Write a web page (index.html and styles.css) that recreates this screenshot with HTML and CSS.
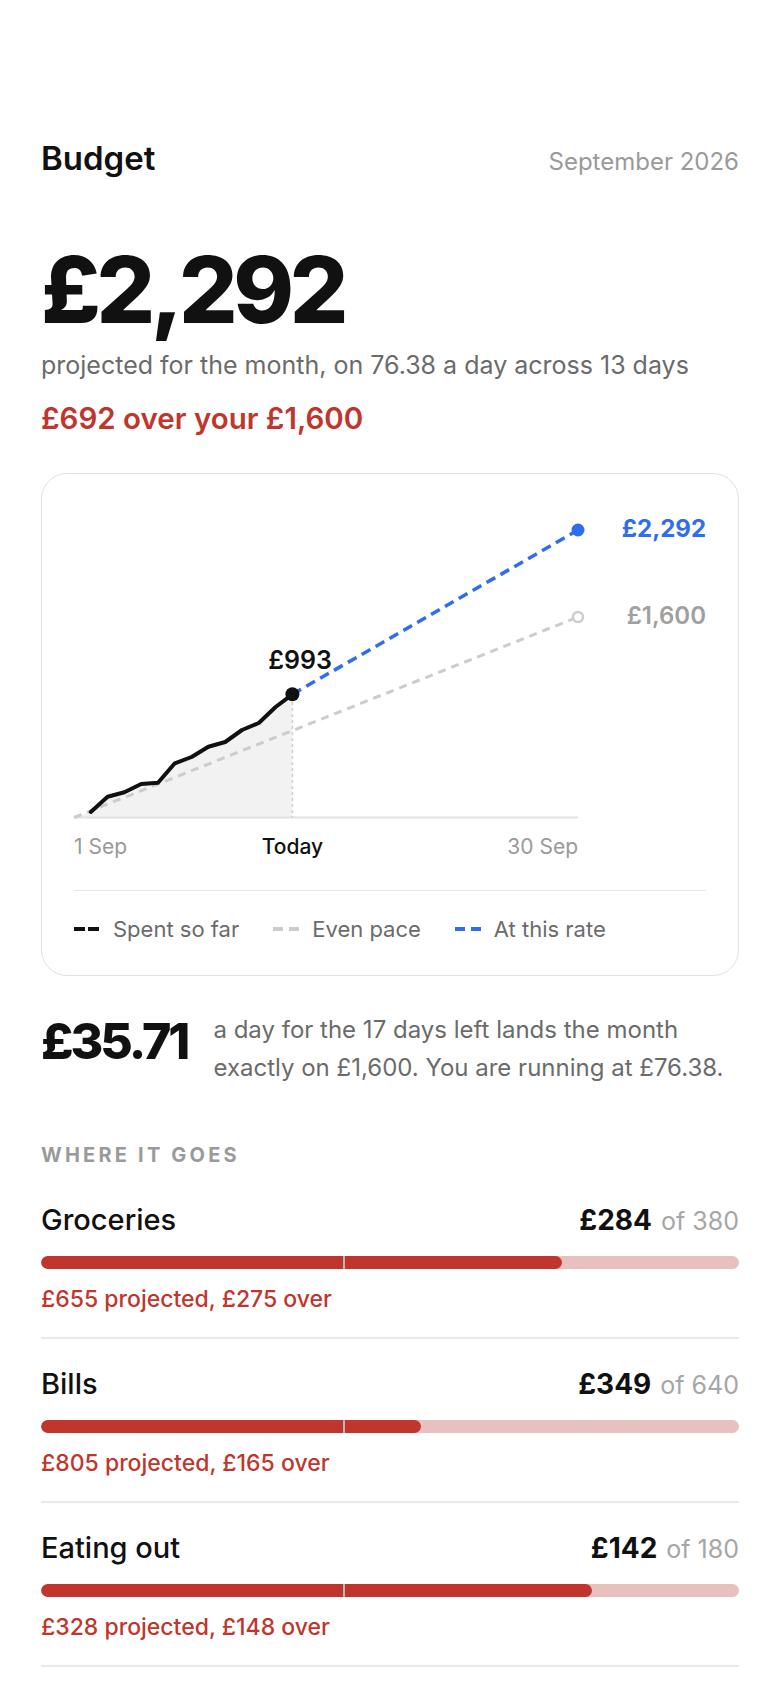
FILE: index.html
```
<!DOCTYPE html>
<html lang="en">
<head>
<meta charset="utf-8">
<title>Budget</title>
<link rel="stylesheet" href="styles.css">
</head>
<body>
<main class="page">
  <header class="header">
    <h1 class="title">Budget</h1>
    <span class="month">September 2026</span>
  </header>

  <section class="hero">
    <div class="hero-amount">£2,292</div>
    <p class="hero-sub">projected for the month, on 76.38 a day across 13 days</p>
    <p class="hero-over">£692 over your £1,600</p>
  </section>

  <section class="card">
    <svg class="chart" width="632" height="360" viewBox="0 0 632 360">
      <polygon class="area" points="0,311.5 16.8,306 33.6,290.7 50.4,286.3 67.2,278 84,276.7 100.8,257.3 117.6,251 134.4,240.7 151.2,236 168,224 184.8,217 201.6,201 218.4,188.3 218.4,311.5"/>
      <line class="axis" x1="0" y1="311.5" x2="504" y2="311.5"/>
      <line class="today-line" x1="218.4" y1="190" x2="218.4" y2="311.5"/>
      <line class="even" x1="0" y1="311.5" x2="504" y2="111"/>
      <line class="rate" x1="218.4" y1="188.3" x2="504" y2="24"/>
      <polyline class="spent" points="16.8,306 33.6,290.7 50.4,286.3 67.2,278 84,276.7 100.8,257.3 117.6,251 134.4,240.7 151.2,236 168,224 184.8,217 201.6,201 218.4,188.3"/>
      <circle class="dot-now" cx="218.4" cy="188.3" r="7"/>
      <circle class="dot-rate" cx="504" cy="24" r="6.5"/>
      <circle class="dot-even" cx="504" cy="111" r="5"/>
      <text class="lbl-now" x="226" y="163">£993</text>
      <text class="lbl-rate" x="632" y="31">£2,292</text>
      <text class="lbl-even" x="632" y="118">£1,600</text>
      <text class="tick" x="0" y="348">1 Sep</text>
      <text class="tick tick-today" x="218.4" y="348">Today</text>
      <text class="tick tick-end" x="504" y="348">30 Sep</text>
    </svg>
    <div class="legend">
      <div class="legend-item">
        <svg class="key" width="26" height="4" viewBox="0 0 26 4"><line class="key-spent" x1="0" y1="2" x2="25" y2="2"/></svg>
        <span>Spent so far</span>
      </div>
      <div class="legend-item">
        <svg class="key" width="26" height="4" viewBox="0 0 26 4"><line class="key-even" x1="0" y1="2" x2="26" y2="2"/></svg>
        <span>Even pace</span>
      </div>
      <div class="legend-item">
        <svg class="key" width="26" height="4" viewBox="0 0 26 4"><line class="key-rate" x1="0" y1="2" x2="26" y2="2"/></svg>
        <span>At this rate</span>
      </div>
    </div>
  </section>

  <section class="daily">
    <div class="daily-amount">£35.71</div>
    <p class="daily-text">a day for the 17 days left lands the month exactly on £1,600. You are running at £76.38.</p>
  </section>

  <section class="categories">
    <h2 class="section-label">WHERE IT GOES</h2>
    <ul class="cat-list">
      <li class="cat">
        <div class="cat-head">
          <span class="cat-name">Groceries</span>
          <span class="cat-amount"><b>£284</b> of 380</span>
        </div>
        <div class="bar"><div class="bar-fill" style="width:74.7%"></div><span class="bar-marker"></span></div>
        <p class="cat-note">£655 projected, £275 over</p>
      </li>
      <li class="cat">
        <div class="cat-head">
          <span class="cat-name">Bills</span>
          <span class="cat-amount"><b>£349</b> of 640</span>
        </div>
        <div class="bar"><div class="bar-fill" style="width:54.5%"></div><span class="bar-marker"></span></div>
        <p class="cat-note">£805 projected, £165 over</p>
      </li>
      <li class="cat">
        <div class="cat-head">
          <span class="cat-name">Eating out</span>
          <span class="cat-amount"><b>£142</b> of 180</span>
        </div>
        <div class="bar"><div class="bar-fill" style="width:78.9%"></div><span class="bar-marker"></span></div>
        <p class="cat-note">£328 projected, £148 over</p>
      </li>
    </ul>
  </section>
</main>
</body>
</html>
```

FILE: styles.css
```
* { box-sizing: border-box; }

html, body {
  margin: 0;
  padding: 0;
  background: #ffffff;
}

body {
  font-family: Inter, "Noto Sans", "Liberation Sans", sans-serif;
  color: #111111;
}

.page {
  width: 780px;
  padding: 138px 41px 0;
}

.header {
  display: flex;
  justify-content: space-between;
  align-items: baseline;
}

.title {
  margin: 0;
  font-size: 33px;
  line-height: 40px;
  font-weight: 600;
}

.month {
  font-size: 24px;
  color: #9a9a9a;
}

.hero {
  margin-top: 66px;
}

.hero-amount {
  font-size: 92px;
  line-height: 92px;
  font-weight: 800;
  letter-spacing: -0.047em;
}

.hero-sub {
  margin: 14px 0 0;
  font-size: 25px;
  line-height: 30px;
  color: #6b6b6b;
}

.hero-over {
  margin: 22px 0 0;
  font-size: 29.5px;
  line-height: 32px;
  font-weight: 600;
  color: #c0362c;
}

.card {
  margin-top: 39px;
  border: 1px solid #e2e2e2;
  border-radius: 26px;
  padding: 32px 32px 32px;
}

.chart {
  display: block;
  overflow: visible;
}

.area { fill: #f2f2f2; }
.axis { stroke: #e2e2e2; stroke-width: 2; }
.today-line { stroke: #cfcfcf; stroke-width: 1.5; stroke-dasharray: 3 3; }
.even { stroke: #cccccc; stroke-width: 3; stroke-dasharray: 8 6; }
.rate { stroke: #2f6df0; stroke-width: 3.5; stroke-dasharray: 10 6; }
.spent {
  fill: none;
  stroke: #111111;
  stroke-width: 4;
  stroke-linejoin: round;
  stroke-linecap: round;
}
.dot-now { fill: #111111; }
.dot-rate { fill: #2f6df0; }
.dot-even { fill: #ffffff; stroke: #cccccc; stroke-width: 2.5; }

.lbl-now {
  font-family: Inter, sans-serif;
  font-size: 25px;
  font-weight: 600;
  fill: #111111;
  text-anchor: middle;
}
.lbl-rate {
  font-family: Inter, sans-serif;
  font-size: 24px;
  font-weight: 700;
  fill: #2f6df0;
  text-anchor: end;
}
.lbl-even {
  font-family: Inter, sans-serif;
  font-size: 24px;
  font-weight: 600;
  fill: #a0a0a0;
  text-anchor: end;
}
.tick {
  font-family: Inter, sans-serif;
  font-size: 21px;
  fill: #9a9a9a;
}
.tick-today {
  fill: #111111;
  font-weight: 500;
  text-anchor: middle;
}
.tick-end { text-anchor: end; }

.legend {
  margin-top: 24px;
  padding-top: 24px;
  border-top: 1px solid #e6e6e6;
  display: flex;
  gap: 34px;
}

.legend-item {
  display: flex;
  align-items: center;
  gap: 13px;
  font-size: 22px;
  line-height: 28px;
  color: #6b6b6b;
}

.key { display: block; }
.key-spent { stroke: #111111; stroke-width: 4; stroke-dasharray: 11 3; }
.key-even { stroke: #cccccc; stroke-width: 4; stroke-dasharray: 10 6; }
.key-rate { stroke: #2f6df0; stroke-width: 4; stroke-dasharray: 10 6; }

.daily {
  margin-top: 40px;
  display: flex;
  align-items: flex-start;
  gap: 26px;
}

.daily-amount {
  font-size: 50px;
  line-height: 50px;
  font-weight: 800;
  letter-spacing: -0.06em;
  white-space: nowrap;
}

.daily-text {
  margin: -5px 0 0;
  font-size: 24px;
  line-height: 38px;
  color: #6b6b6b;
}

.categories {
  margin-top: 55px;
}

.section-label {
  margin: 0;
  padding-top: 3px;
  font-size: 20px;
  line-height: 20px;
  font-weight: 700;
  letter-spacing: 0.16em;
  color: #9a9a9a;
}

.cat-list {
  list-style: none;
  margin: 9px 0 0;
  padding: 0;
}

.cat {
  padding: 29px 0 24px;
  border-bottom: 2px solid #e8e8e8;
}

.cat:first-child {
  padding-top: 30px;
}

.cat-head {
  display: flex;
  justify-content: space-between;
  align-items: baseline;
  line-height: 32px;
}

.cat-name {
  font-size: 29px;
  font-weight: 500;
}

.cat-amount {
  font-size: 25px;
  color: #a6a6a6;
}

.cat-amount b {
  font-size: 28px;
  font-weight: 700;
  color: #111111;
  margin-right: 2px;
}

.bar {
  position: relative;
  margin-top: 19px;
  height: 13px;
  border-radius: 7px;
  background: #e8c1be;
  overflow: hidden;
}

.bar-fill {
  height: 100%;
  border-radius: 7px;
  background: #c0362c;
}

.bar-marker {
  position: absolute;
  top: 0;
  bottom: 0;
  left: 43.33%;
  width: 2px;
  background: #b8b8b8;
}

.cat-note {
  margin: 16px 0 0;
  font-size: 23px;
  line-height: 28px;
  font-weight: 500;
  color: #c0362c;
}
```
